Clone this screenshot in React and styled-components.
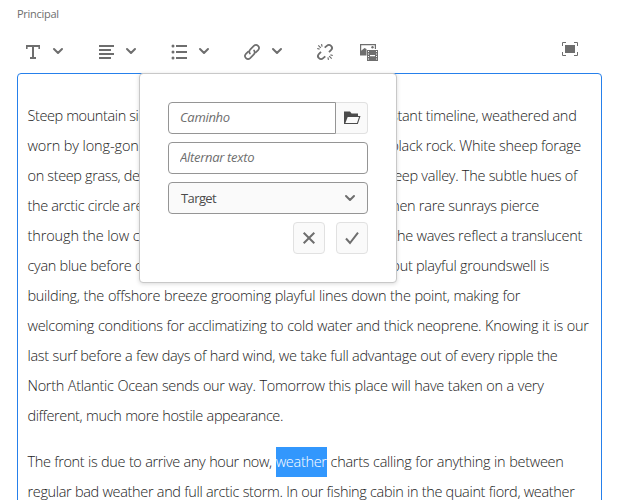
import React from "react";
import styled, { createGlobalStyle } from "styled-components";

const GlobalStyle = createGlobalStyle`
  *, *::before, *::after { box-sizing: border-box; }
  body { margin: 0; background: #fff; overflow: hidden; }
`;

const Page = styled.main`
  display: flex;
  flex-direction: column;
  width: 617px;
  height: 500px;
  padding: 6px 15px 0 17px;
  overflow: hidden;
  font-family: "Open Sans", "Noto Sans", sans-serif;
`;

const FieldLabel = styled.label`
  height: 16px;
  font-size: 11px;
  line-height: 16px;
  letter-spacing: -0.28px;
  color: #6e6e6e;
`;

const Toolbar = styled.div`
  display: flex;
  flex: none;
  height: 51px;
  padding-top: 13px;
`;

const ToolButton = styled.button`
  display: flex;
  align-items: center;
  flex: none;
  gap: ${(p) => p.$gap || 0}px;
  width: ${(p) => p.$width}px;
  height: 32px;
  margin-left: ${(p) => p.$push || "0"};
  padding: 0 0 0 7px;
  border: 0;
  background: none;
  color: #6e6e6e;
`;

const Icon = styled.svg`
  display: block;
  flex: none;
  width: ${(p) => p.$size || 18}px;
  height: ${(p) => p.$size || 18}px;
  overflow: visible;
`;

const Editor = styled.section`
  position: relative;
  flex: none;
  width: 585px;
  height: 480px;
  padding: 27px 0 0 9.5px;
  border: 1px solid #2680eb;
  border-radius: 4px;
`;

const Paragraph = styled.p`
  margin: 0 0 15.5px;
  font-size: 14.5px;
  font-weight: 300;
  line-height: 30px;
  letter-spacing: -0.28px;
  color: #1c1c1c;
`;

const Line = styled.span`
  display: block;
  width: ${(p) => p.$width}px;
  letter-spacing: ${(p) => p.$tracking || -0.3}px;
  text-align-last: justify;
  white-space: nowrap;
`;

const SplitLine = styled.span`
  display: flex;
  justify-content: space-between;
  width: ${(p) => p.$width}px;
  white-space: nowrap;
`;

const LineStart = styled.span`
  letter-spacing: ${(p) => p.$tracking}px;
`;

const Selection = styled.mark`
  display: inline-block;
  height: 30px;
  vertical-align: top;
  background: #3297fd;
  color: #fff;
`;

const Popover = styled.form`
  position: absolute;
  top: -1px;
  left: 121px;
  display: flex;
  flex-direction: column;
  gap: 8px;
  width: 258px;
  height: 210px;
  padding: 28px;
  border: 1px solid #c8c8c8;
  border-radius: 4px;
  background: #fff;
  box-shadow: 0 1px 4px rgba(0, 0, 0, 0.15);
`;

const InputGroup = styled.div`
  display: flex;
`;

const TextInput = styled.input`
  flex: ${(p) => (p.$attached ? "1 1 0" : "0 0 32px")};
  min-width: 0;
  height: 32px;
  padding: 0 11px 2px;
  border: 1px solid #959595;
  border-radius: ${(p) => (p.$attached ? "4px 0 0 4px" : "4px")};
  outline: 0;
  background: #fff;
  font: 400 13px "Open Sans", sans-serif;
  letter-spacing: -0.3px;
  color: #4b4b4b;

  &::placeholder {
    color: #6e6e6e;
    font-style: italic;
    opacity: 1;
  }
`;

const SquareButton = styled.button`
  display: flex;
  align-items: center;
  justify-content: center;
  flex: none;
  width: 32px;
  height: 32px;
  padding: 0;
  border: 1px solid #e1e1e1;
  border-left-width: ${(p) => (p.$attached ? 0 : 1)}px;
  border-radius: ${(p) => (p.$attached ? "0 4px 4px 0" : "4px")};
  background: #fafafa;
  color: ${(p) => (p.$attached ? "#4b4b4b" : "#6e6e6e")};
`;

const Select = styled.button`
  display: flex;
  align-items: center;
  justify-content: space-between;
  flex: none;
  height: 32px;
  padding: 0 11px 1px 12px;
  border: 1px solid #959595;
  border-radius: 4px;
  background: #fafafa;
  font: 400 13px "Open Sans", sans-serif;
  letter-spacing: -0.6px;
  color: #4b4b4b;
`;

const Actions = styled.div`
  display: flex;
  justify-content: flex-end;
  gap: 11px;
`;

const Chevron = () => (
  <Icon $size={12} viewBox="0 0 12 12" fill="none" stroke="#6e6e6e" strokeWidth="2" strokeLinecap="round" strokeLinejoin="round">
    <path d="M2 4l4 4 4-4" />
  </Icon>
);

const TextIcon = () => (
  <Icon viewBox="0 -1 18 18" fill="currentColor">
    <path d="M2 2h14v4h-1.600V4H10v10h2v2H6v-2h2V4H3.600v2H2z" />
  </Icon>
);

const AlignIcon = () => (
  <Icon viewBox="0 -1 18 18" fill="currentColor">
    <path d="M2 2h15v2H2zM2 6h12v2H2zM2 10h15v2H2zM2 14h12v2H2z" />
  </Icon>
);

const ListIcon = () => (
  <Icon viewBox="0 -1 18 18" fill="currentColor">
    <path d="M6 2h11v2H6zM6 8h11v2H6zM6 14h11v2H6z" />
    <circle cx="3" cy="3" r="1.500" />
    <circle cx="3" cy="9" r="1.500" />
    <circle cx="3" cy="15" r="1.500" />
  </Icon>
);

const LinkIcon = () => (
  <Icon viewBox="0 -1 18 18" fill="none" stroke="currentColor" strokeWidth="1.700" strokeLinecap="round">
    <path d="M6.900 10.500C5.900 9 6.200 7.500 7.400 6.300L10.800 2.900c2.900-2.700 7 1.200 4.300 4.200l-2.300 2.300" />
    <path d="M11.100 7.500c1 1.500.7 3-.5 4.200L7.200 15.100c-2.900 2.700-7-1.200-4.300-4.200l2.300-2.300" />
  </Icon>
);

const UnlinkIcon = () => (
  <Icon viewBox="0 -1 18 18" fill="none" stroke="currentColor" strokeWidth="1.800">
    <path d="M8.700 4.700l2.100-1.900c2.900-2.600 7 1.200 4.400 4.200l-2.200 2.200" />
    <path d="M9.300 13.300l-2.100 1.900c-2.900 2.600-7-1.200-4.400-4.200l2.200-2.200" />
    <path strokeWidth="1.200" d="M5.500 1.200l.6 2.400M2.300 2.300l2.500 2.500M1.200 5.500l2.400.6M12.500 16.800l-.6-2.400M15.700 15.700l-2.500-2.500M16.800 12.500l-2.400-.6" />
  </Icon>
);

const MediaIcon = () => (
  <Icon viewBox="0 -1 18 18" fill="currentColor">
    <path d="M0 1h16v5h-1.200V2.200H1.200v5.600L4.500 5 6.500 6v6.500H0z" />
    <circle cx="12.500" cy="4.300" r="1.200" />
    <path fillRule="evenodd" d="M7 7h11v11H7zM8 8v1h1V8zM8 10.500v1h1v-1zM8 13v1h1v-1zM8 15.500v1h1v-1zM16 8v1h1V8zM16 10.500v1h1v-1zM16 13v1h1v-1zM16 15.500v1h1v-1zM10 12v1.200h5V12z" />
  </Icon>
);

const FullscreenIcon = () => (
  <Icon viewBox="0 0 18 18">
    <path fill="none" stroke="currentColor" d="M1.500 4V.5H5M13 .5h3.500V4M16.500 10v3.500H13M5 13.500H1.500V10" />
    <path fill="currentColor" d="M4 3h10v8H4z" />
  </Icon>
);

const FolderIcon = () => (
  <Icon viewBox="0 0 18 18" fill="currentColor">
    <path fillRule="evenodd" d="M1 15V2.500h6l1.600 2H15V7h2.500l-2.700 8H1zM4.700 8L2.400 14H14l2-6z" />
  </Icon>
);

const CloseIcon = () => (
  <Icon $size={12} viewBox="0 0 12 12" fill="none" stroke="currentColor" strokeWidth="2">
    <path d="M.7.700l10.600 10.600M11.300.700L.7 11.300" />
  </Icon>
);

const CheckIcon = () => (
  <Icon $size={14} viewBox="0 0 14 14" fill="none" stroke="currentColor" strokeWidth="2">
    <path d="M1 7.500l4 4.500 8-10.300" />
  </Icon>
);

const coveredLines = [
  [549, "Steep mountain sides", "distant timeline, weathered and", -0.4],
  [553.5, "worn by long-gone", "black rock. White sheep forage", -0.12],
  [549.5, "on steep grass, deep", "deep valley. The subtle hues of", -0.36],
  [511.5, "the arctic circle are", "when rare sunrays pierce", -0.36],
  [554.5, "through the low clouds", "the waves reflect a translucent", -0.12],
  [521.5, "cyan blue before our", "but playful groundswell is", -0.3],
];

const openLines = [
  [492.5, "building, the offshore breeze grooming playful lines down the point, making for"],
  [561, "welcoming conditions for acclimatizing to cold water and thick neoprene. Knowing it is our"],
  [530, "last surf before a few days of hard wind, we take full advantage out of every ripple the"],
  [516, "North Atlantic Ocean sends our way. Tomorrow this place will have taken on a very"],
  [255.5, "different, much more hostile appearance.", -0.4],
];

export default function App() {
  return (
    <Page>
      <GlobalStyle />
      <FieldLabel>Principal</FieldLabel>
      <Toolbar>
        <ToolButton $width={73} $gap={10}><TextIcon /><Chevron /></ToolButton>
        <ToolButton $width={73} $gap={10}><AlignIcon /><Chevron /></ToolButton>
        <ToolButton $width={73} $gap={10}><ListIcon /><Chevron /></ToolButton>
        <ToolButton $width={73} $gap={10}><LinkIcon /><Chevron /></ToolButton>
        <ToolButton $width={44}><UnlinkIcon /></ToolButton>
        <ToolButton $width={32}><MediaIcon /></ToolButton>
        <ToolButton $width={48} $push="auto"><FullscreenIcon /></ToolButton>
      </Toolbar>
      <Editor>
        <Paragraph>
          {coveredLines.map(([width, start, end, tracking]) => (
            <SplitLine key={start} $width={width}>
              <LineStart $tracking={tracking}>{start}</LineStart>
              <span>{end}</span>
            </SplitLine>
          ))}
          {openLines.map(([width, text, tracking]) => (
            <Line key={text} $width={width} $tracking={tracking}>{text}</Line>
          ))}
        </Paragraph>
        <Paragraph>
          <Line $width={536} $tracking={-0.3}>
            <LineStart $tracking={-0.39}>The front is due to arrive any hour now,</LineStart>{" "}
            <Selection>weather</Selection> charts calling for anything in between
          </Line>
          <Line $width={547} $tracking={-0.34}>
            regular bad weather and full arctic storm. In our fishing cabin in the quaint fiord, weather
          </Line>
        </Paragraph>
        <Popover>
          <InputGroup>
            <TextInput $attached placeholder="Caminho" />
            <SquareButton $attached type="button"><FolderIcon /></SquareButton>
          </InputGroup>
          <TextInput placeholder="Alternar texto" />
          <Select type="button"><span>Target</span><Chevron /></Select>
          <Actions>
            <SquareButton type="button"><CloseIcon /></SquareButton>
            <SquareButton type="button"><CheckIcon /></SquareButton>
          </Actions>
        </Popover>
      </Editor>
    </Page>
  );
}
